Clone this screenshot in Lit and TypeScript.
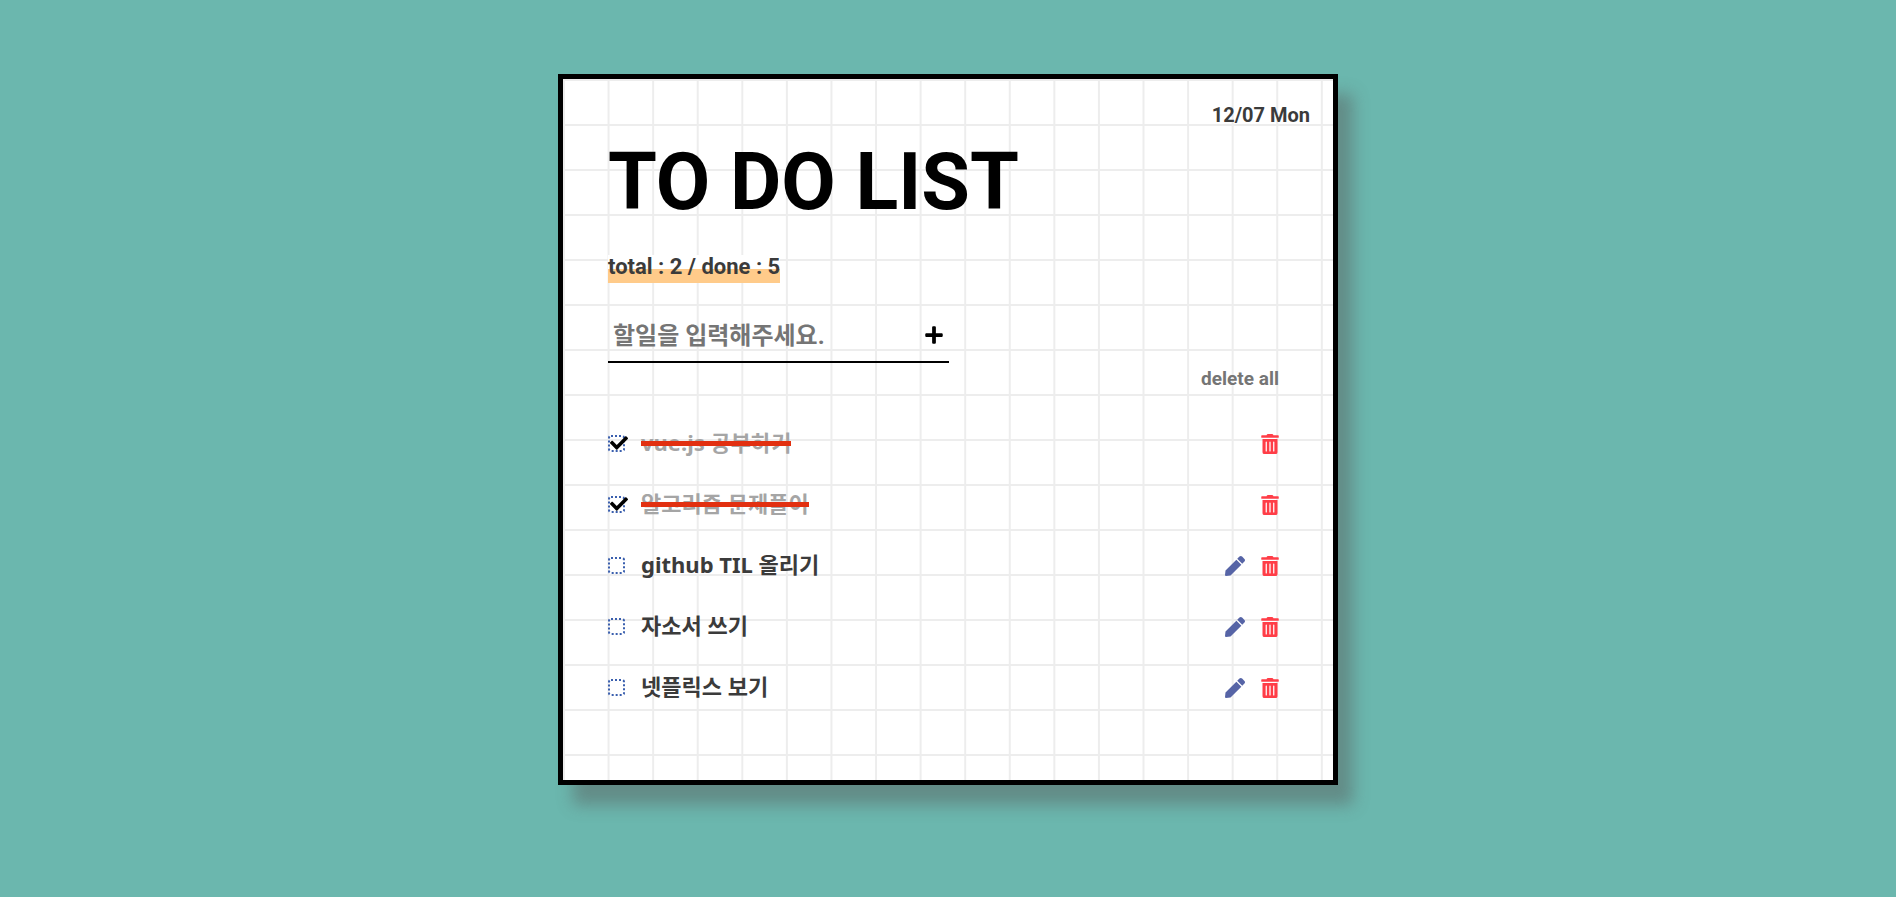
import { LitElement, html, css, svg, nothing } from "lit";
import { customElement, property, state } from "lit/decorators.js";
import { classMap } from "lit/directives/class-map.js";

interface Todo {
  id: number;
  text: string;
  done: boolean;
}

const CHECK = svg`<path d="M173.898 439.404l-166.4-166.4c-9.997-9.997-9.997-26.206 0-36.204l36.203-36.204c9.997-9.998 26.207-9.998 36.204 0L192 312.69 432.095 72.596c9.997-9.997 26.207-9.997 36.204 0l36.203 36.204c9.997 9.997 9.997 26.206 0 36.204l-294.4 294.401c-9.998 9.997-26.207 9.997-36.204-.001z"/>`;
const PLUS = svg`<path d="M416 208H272V64c0-17.67-14.33-32-32-32h-32c-17.67 0-32 14.33-32 32v144H32c-17.67 0-32 14.33-32 32v32c0 17.67 14.33 32 32 32h144v144c0 17.67 14.33 32 32 32h32c17.67 0 32-14.33 32-32V304h144c17.67 0 32-14.33 32-32v-32c0-17.67-14.33-32-32-32z"/>`;
const PEN = svg`<path d="M290.74 93.24l128.02 128.02-277.99 277.99-114.14 12.6C11.35 513.54-1.56 500.62.14 485.34l12.7-114.22 277.9-277.88zm207.2-19.06l-60.11-60.11c-18.75-18.75-49.16-18.75-67.91 0l-56.55 56.55 128.02 128.02 56.55-56.55c18.75-18.76 18.75-49.16 0-67.91z"/>`;
const TRASH = svg`<path d="M32 464a48 48 0 0 0 48 48h288a48 48 0 0 0 48-48V128H32zm272-256a16 16 0 0 1 32 0v224a16 16 0 0 1-32 0zm-96 0a16 16 0 0 1 32 0v224a16 16 0 0 1-32 0zm-96 0a16 16 0 0 1 32 0v224a16 16 0 0 1-32 0zM432 32H312l-9.4-18.7A24 24 0 0 0 281.1 0H166.8a23.72 23.72 0 0 0-21.4 13.3L136 32H16A16 16 0 0 0 0 48v32a16 16 0 0 0 16 16h416a16 16 0 0 0 16-16V48a16 16 0 0 0-16-16z"/>`;

@customElement("todo-item")
class TodoItem extends LitElement {
  @property({ attribute: false }) todo!: Todo;

  static styles = css`
    :host {
      display: block;
    }
    .row {
      display: flex;
      align-items: center;
      justify-content: space-between;
      height: 61px;
    }
    .label {
      display: flex;
      align-items: center;
      gap: 16px;
      cursor: pointer;
    }
    .tick {
      position: relative;
      display: block;
      width: 17px;
      height: 17px;
    }
    .box {
      appearance: none;
      display: block;
      box-sizing: border-box;
      width: 17px;
      height: 17px;
      margin: 0;
      border: 2px dotted #3a5fae;
      border-radius: 3px;
      cursor: pointer;
    }
    .mark {
      position: absolute;
      left: 2px;
      top: -1px;
      width: 18px;
      height: 18px;
      fill: #000;
      pointer-events: none;
    }
    .text {
      position: relative;
      padding-bottom: 4px;
      font-family: "Noto Sans", "Noto Sans CJK KR", sans-serif;
      font-size: 22px;
      line-height: 24px;
    }
    .done {
      color: #a5a5a5;
    }
    .done::after {
      content: "";
      position: absolute;
      left: 0;
      right: 0;
      bottom: 12px;
      height: 5px;
      background: #e23010;
    }
    .actions {
      display: flex;
      gap: 16px;
      padding-top: 1px;
    }
    .action {
      display: block;
      padding: 0;
      border: 0;
      background: none;
      cursor: pointer;
    }
    .icon {
      display: block;
      height: 20px;
      fill: currentColor;
    }
    .edit {
      color: #5664a6;
    }
    .remove {
      color: #ff3d47;
    }
  `;

  private send(type: string) {
    this.dispatchEvent(new CustomEvent(type, { detail: this.todo.id }));
  }

  render() {
    const { text, done } = this.todo;
    return html`
      <div class="row">
        <label class="label">
          <span class="tick">
            <input class="box" type="checkbox" .checked=${done} @change=${() => this.send("toggle-done")} />
            ${done ? html`<svg class="mark" viewBox="0 0 512 512" aria-hidden="true">${CHECK}</svg>` : nothing}
          </span>
          <span class=${classMap({ text: true, done })}>${text}</span>
        </label>
        <div class="actions">
          ${done
            ? nothing
            : html`<button class="action edit" type="button" aria-label="edit">
                <svg class="icon" width="20" viewBox="0 0 512 512">${PEN}</svg>
              </button>`}
          <button class="action remove" type="button" aria-label="delete" @click=${() => this.send("remove")}>
            <svg class="icon" width="18" viewBox="0 0 448 512">${TRASH}</svg>
          </button>
        </div>
      </div>
    `;
  }
}

@customElement("app-root")
class AppRoot extends LitElement {
  @state() private todos: Todo[] = [
    { id: 1, text: "vue.js 공부하기", done: true },
    { id: 2, text: "알고리즘 문제풀이", done: true },
    { id: 3, text: "github TIL 올리기", done: false },
    { id: 4, text: "자소서 쓰기", done: false },
    { id: 5, text: "넷플릭스 보기", done: false },
  ];

  static styles = css`
    :host {
      display: block;
      box-sizing: border-box;
      min-height: 100vh;
      padding: 74px 16px;
      background: #6bb7ae;
      color: #3b3b3b;
      font-family: Roboto, "Noto Sans CJK KR", sans-serif;
      font-weight: 700;
    }
    .card {
      box-sizing: border-box;
      max-width: 780px;
      margin: 0 auto;
      padding: 24px 23px 62px 45px;
      border: 5px solid #000;
      background-color: #fff;
      background-image: linear-gradient(#ededed 2px, transparent 2px),
        linear-gradient(90deg, #ededed 2px, transparent 2px);
      background-size: 100% 45px, 5.79% 100%;
      box-shadow: 15px 20px 15px rgba(88, 88, 88, 0.45);
    }
    .date {
      display: block;
      text-align: right;
      font-size: 20px;
      line-height: 24px;
    }
    .title {
      margin: 10px 0 28px;
      color: #000;
      font-size: 79px;
      line-height: 90px;
    }
    .count {
      width: fit-content;
      margin: 0;
      padding-bottom: 4px;
      background: linear-gradient(#fff 50%, #ffcb8a 50%);
      font-size: 22px;
      line-height: 24px;
    }
    .form {
      display: flex;
      align-items: center;
      max-width: 341px;
      margin-top: 28px;
      border-bottom: 2px solid #000;
    }
    .field {
      flex: 1;
      min-width: 0;
      height: 50px;
      box-sizing: border-box;
      padding: 0 5px;
      border: 0;
      outline: 0;
      background: none;
      color: inherit;
      font: inherit;
      font-size: 24px;
    }
    .field::placeholder {
      color: #757575;
      opacity: 1;
    }
    .add {
      display: block;
      padding: 5px 6px 8px;
      border: 0;
      background: none;
      cursor: pointer;
    }
    .plus {
      display: block;
      width: 18px;
      height: 20px;
    }
    .body {
      padding-right: 31px;
    }
    .clear {
      display: block;
      margin: 4px 0 22px auto;
      padding: 0;
      border: 0;
      background: none;
      color: #757575;
      font: inherit;
      font-size: 19px;
      line-height: 24px;
      cursor: pointer;
    }
    .list {
      margin: 0;
      padding: 0;
      list-style: none;
    }
  `;

  private toggle(id: number) {
    this.todos = this.todos.map((t) => (t.id === id ? { ...t, done: !t.done } : t));
  }

  private remove(id: number) {
    this.todos = this.todos.filter((t) => t.id !== id);
  }

  private add(e: Event) {
    e.preventDefault();
    const field = this.renderRoot.querySelector<HTMLInputElement>(".field")!;
    const text = field.value.trim();
    if (!text) return;
    this.todos = [...this.todos, { id: Date.now(), text, done: false }];
    field.value = "";
  }

  render() {
    return html`
      <main class="card" lang="ko">
        <time class="date">12/07 Mon</time>
        <h1 class="title">TO DO LIST</h1>
        <p class="count">total : 2 / done : 5</p>
        <form class="form" @submit=${this.add}>
          <input class="field" type="text" placeholder="할일을 입력해주세요." aria-label="할일" />
          <button class="add" type="submit" aria-label="add">
            <svg class="plus" viewBox="0 0 448 512">${PLUS}</svg>
          </button>
        </form>
        <div class="body">
          <button class="clear" type="button" @click=${() => (this.todos = [])}>delete all</button>
          <ul class="list">
            ${this.todos.map(
              (todo) => html`<li>
                <todo-item
                  .todo=${todo}
                  @toggle-done=${() => this.toggle(todo.id)}
                  @remove=${() => this.remove(todo.id)}
                ></todo-item>
              </li>`
            )}
          </ul>
        </div>
      </main>
    `;
  }
}
